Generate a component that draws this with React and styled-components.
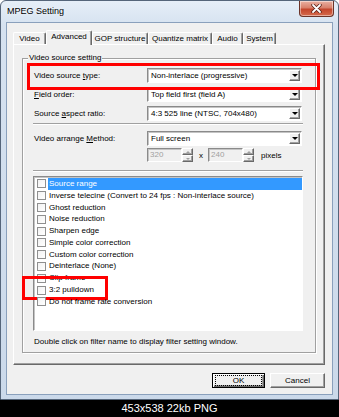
import React from "react";
import styled, { createGlobalStyle, css } from "styled-components";

const GlobalStyle = createGlobalStyle`
  html, body { margin: 0; padding: 0; }
  body { background: #000; font-family: "Liberation Sans", Arial, sans-serif; }
`;

const raised = css`
  background: #f0f0f0;
  border: 1px solid;
  border-color: #fff #696969 #696969 #fff;
  box-shadow: inset -1px -1px 0 #a0a0a0;
  box-sizing: border-box;
`;

const sunken = css`
  border: 1px solid;
  border-color: #8a8a8a #fff #fff #8a8a8a;
  box-shadow: inset 1px 1px 0 #c4c4c4;
  box-sizing: border-box;
`;

const Page = styled.div`
  width: 339px;
  height: 417px;
  display: flex;
  flex-direction: column;
  background: linear-gradient(#fff 0 50%, #000 50%);
  overflow: hidden;
`;

const Window = styled.div`
  height: 400px;
  box-sizing: border-box;
  display: flex;
  flex-direction: column;
  border: 1px solid #55657a;
  border-radius: 6px 6px 0 0;
  background: linear-gradient(180deg, #e6eef8 0, #d6e2f0 24px, #cbd9ea 100%);
`;

const TitleBar = styled.div`
  height: 21px;
  display: flex;
  align-items: flex-start;
  justify-content: space-between;
  padding-left: 6px;
`;

const Title = styled.span`
  font-size: 9px;
  line-height: 21px;
  color: #000;
  text-shadow: 0 0 4px #fff;
`;

const CloseButton = styled.div`
  width: 35px;
  height: 16px;
  margin-right: 4px;
  box-sizing: border-box;
  border: 1px solid #6b3328;
  border-top: none;
  border-radius: 0 0 4px 4px;
  background: linear-gradient(180deg, #eab1a3 0, #d8806b 45%, #c4462d 55%, #d46a4c 100%);
  box-shadow: inset 0 0 0 1px rgba(255, 255, 255, 0.45);
  display: flex;
  align-items: center;
  justify-content: center;
`;

const Client = styled.div`
  flex: 1;
  margin: 0 5px 4px 5px;
  border: 1px solid #8aa0bc;
  background: #f0f0f0;
  display: flex;
  flex-direction: column;
  padding: 7px 7px 0 6px;
`;

const TabStrip = styled.div`
  height: 14px;
  display: flex;
  align-items: flex-end;
  position: relative;
  z-index: 1;
`;

const Tab = styled.div`
  width: ${(p) => p.$w}px;
  height: ${(p) => (p.$active ? 15 : 12)}px;
  margin-bottom: ${(p) => (p.$active ? -1 : 0)}px;
  box-sizing: border-box;
  background: #f0f0f0;
  border-top: 1px solid #fff;
  border-left: 1px solid #fff;
  border-right: 1px solid #696969;
  box-shadow: inset -1px 0 0 #a0a0a0;
  border-radius: 2px 2px 0 0;
  font-size: 8px;
  line-height: ${(p) => (p.$active ? 12 : 11)}px;
  text-align: center;
  color: #000;
  white-space: nowrap;
`;

const TabPanel = styled.div`
  height: 321px;
  box-sizing: border-box;
  border: 1px solid;
  border-color: #fff #696969 #696969 #fff;
  box-shadow: inset -1px -1px 0 #a0a0a0;
  padding: 13px 8px 0 8px;
`;

const Group = styled.div`
  border: 1px solid #a0a0a0;
  box-shadow: inset 1px 1px 0 #fff, 1px 1px 0 #fff;
  display: flex;
  flex-direction: column;
  padding: 0 13px 5px 11px;
  height: 295px;
  box-sizing: border-box;
`;

const Legend = styled.span`
  align-self: flex-start;
  margin: -6px 0 0 -6px;
  padding: 0 1px;
  background: #f0f0f0;
  font-size: 8px;
  line-height: 10px;
  color: #000;
`;

const Row = styled.div`
  display: flex;
  align-items: center;
  height: ${(p) => p.$h || 15}px;
  margin-top: ${(p) => p.$mt || 0}px;
  position: relative;
  ${(p) =>
    p.$mark &&
    css`
      &::after {
        content: "";
        position: absolute;
        top: -5px;
        bottom: -7px;
        left: -7px;
        right: -18px;
        border: 3px solid #ff0000;
        pointer-events: none;
        z-index: 2;
      }
    `}
`;

const Label = styled.span`
  width: 113px;
  flex: none;
  font-size: 8px;
  color: #000;
  white-space: nowrap;
  u { text-decoration: underline; }
`;

const Combo = styled.div`
  ${sunken};
  width: 155px;
  height: 15px;
  background: #fff;
  display: flex;
  align-items: stretch;
  padding: 1px;
`;

const ComboText = styled.span`
  flex: 1;
  font-size: 8px;
  line-height: 12px;
  padding-left: 2px;
  white-space: nowrap;
  overflow: hidden;
  color: #000;
`;

const DropButton = styled.div`
  ${raised};
  width: 11px;
  display: flex;
  align-items: center;
  justify-content: center;
  &::before {
    content: "";
    border-left: 3px solid transparent;
    border-right: 3px solid transparent;
    border-top: 3px solid #000;
  }
`;

const Separator = styled.div`
  height: 1px;
  margin: ${(p) => p.$mt}px -1px 0 -1px;
  background: #a0a0a0;
  border-bottom: 1px solid #fff;
`;

const SpinEdit = styled.div`
  ${sunken};
  width: 35px;
  height: 14px;
  background: #f0f0f0;
  font-size: 8px;
  line-height: 12px;
  padding-left: 2px;
  color: #a0a0a0;
`;

const SpinButtons = styled.div`
  width: 11px;
  height: 14px;
  display: flex;
  flex-direction: column;
`;

const SpinArrow = styled.div`
  ${raised};
  flex: 1;
  display: flex;
  align-items: center;
  justify-content: center;
  &::before {
    content: "";
    border-left: 2px solid transparent;
    border-right: 2px solid transparent;
    ${(p) =>
      p.$up
        ? "border-bottom: 2px solid #a0a0a0;"
        : "border-top: 2px solid #a0a0a0;"}
  }
`;

const SmallText = styled.span`
  font-size: 8px;
  color: #000;
  margin: 0 ${(p) => p.$mr || 0}px 0 ${(p) => p.$ml || 0}px;
`;

const FilterList = styled.div`
  ${sunken};
  height: 156px;
  margin: 4px -1px 0 -1px;
  background: #fff;
  padding: 1px 0 0 3px;
`;

const FilterItem = styled.div`
  height: 11.8px;
  display: flex;
  align-items: center;
  position: relative;
  ${(p) =>
    p.$mark &&
    css`
      &::after {
        content: "";
        position: absolute;
        top: -8px;
        bottom: -4px;
        left: -15px;
        width: 86px;
        border: 3px solid #ff0000;
        box-sizing: border-box;
        pointer-events: none;
      }
    `}
`;

const CheckBox = styled.span`
  width: 9px;
  height: 9px;
  flex: none;
  box-sizing: border-box;
  border: 1px solid #8f8f8f;
  background: linear-gradient(135deg, #f2f2f2, #fff);
  margin-right: 2px;
`;

const ItemText = styled.span`
  flex: 1;
  font-size: 8px;
  line-height: 12px;
  padding-left: 1px;
  white-space: nowrap;
  color: ${(p) => (p.$selected ? "#fff" : "#000")};
  background: ${(p) => (p.$selected ? "#3399ff" : "transparent")};
`;

const Note = styled.div`
  font-size: 8px;
  line-height: 10px;
  margin-top: 6px;
  color: #000;
  white-space: nowrap;
`;

const ButtonRow = styled.div`
  display: flex;
  justify-content: flex-end;
  gap: 5px;
  margin-top: 8px;
`;

const PushButton = styled.div`
  ${raised};
  width: ${(p) => p.$w}px;
  height: 15px;
  font-size: 8px;
  line-height: 13px;
  text-align: center;
  color: #000;
  ${(p) =>
    p.$default &&
    css`
      border: 1px solid #000;
      box-shadow: inset 1px 1px 0 #fff, inset -1px -1px 0 #696969,
        inset -2px -2px 0 #a0a0a0;
      span {
        display: block;
        margin: 2px 3px;
        line-height: 9px;
        outline: 1px dotted #000;
      }
    `}
`;

const Caption = styled.div`
  height: 17px;
  background: #000;
  color: #fff;
  font-size: 11px;
  line-height: 17px;
  text-align: center;
`;

const tabs = [
  { name: "Video", w: 33 },
  { name: "Advanced", w: 46, active: true },
  { name: "GOP structure", w: 56 },
  { name: "Quantize matrix", w: 64 },
  { name: "Audio", w: 31 },
  { name: "System", w: 33 },
];

const filters = [
  "Source range",
  "Inverse telecine (Convert to 24 fps : Non-interlace source)",
  "Ghost reduction",
  "Noise reduction",
  "Sharpen edge",
  "Simple color correction",
  "Custom color correction",
  "Deinterlace (None)",
  "Clip frame",
  "3:2 pulldown",
  "Do not frame rate conversion",
];

const Spin = ({ value }) => (
  <>
    <SpinEdit>{value}</SpinEdit>
    <SpinButtons>
      <SpinArrow $up />
      <SpinArrow />
    </SpinButtons>
  </>
);

export default function App() {
  return (
    <>
      <GlobalStyle />
      <Page>
        <Window>
          <TitleBar>
            <Title>MPEG Setting</Title>
            <CloseButton>
              <svg width="11" height="9" viewBox="0 0 11 9">
                <path d="M2 1 L9 8 M9 1 L2 8" stroke="#5a2118" strokeWidth="3.4" strokeLinecap="round" />
                <path d="M2 1 L9 8 M9 1 L2 8" stroke="#fff" strokeWidth="1.8" strokeLinecap="round" />
              </svg>
            </CloseButton>
          </TitleBar>
          <Client>
            <TabStrip>
              {tabs.map((t) => (
                <Tab key={t.name} $w={t.w} $active={t.active}>
                  {t.name}
                </Tab>
              ))}
            </TabStrip>
            <TabPanel>
              <Group>
                <Legend>Video source setting</Legend>
                <Row $mt={5} $mark>
                  <Label>Video source <u>t</u>ype:</Label>
                  <Combo>
                    <ComboText>Non-interlace (progressive)</ComboText>
                    <DropButton />
                  </Combo>
                </Row>
                <Row $mt={4}>
                  <Label><u>F</u>ield order:</Label>
                  <Combo>
                    <ComboText>Top field first (field A)</ComboText>
                    <DropButton />
                  </Combo>
                </Row>
                <Row $mt={4}>
                  <Label>Source <u>a</u>spect ratio:</Label>
                  <Combo>
                    <ComboText>4:3 525 line (NTSC, 704x480)</ComboText>
                    <DropButton />
                  </Combo>
                </Row>
                <Separator $mt={2} />
                <Row $mt={6}>
                  <Label>Video arrange <u>M</u>ethod:</Label>
                  <Combo>
                    <ComboText>Full screen</ComboText>
                    <DropButton />
                  </Combo>
                </Row>
                <Row $mt={2} $h={14}>
                  <Label />
                  <Spin value="320" />
                  <SmallText $ml={6} $mr={5}>x</SmallText>
                  <Spin value="240" />
                  <SmallText $ml={7}>pixels</SmallText>
                </Row>
                <Separator $mt={8} />
                <FilterList>
                  {filters.map((f, i) => (
                    <FilterItem key={f} $mark={f === "3:2 pulldown"}>
                      <CheckBox />
                      <ItemText $selected={i === 0}>{f}</ItemText>
                    </FilterItem>
                  ))}
                </FilterList>
                <Note>Double click on filter name to display filter setting window.</Note>
              </Group>
            </TabPanel>
            <ButtonRow>
              <PushButton $w={53} $default>
                <span>OK</span>
              </PushButton>
              <PushButton $w={55}>Cancel</PushButton>
            </ButtonRow>
          </Client>
        </Window>
        <Caption>453x538 22kb PNG</Caption>
      </Page>
    </>
  );
}
